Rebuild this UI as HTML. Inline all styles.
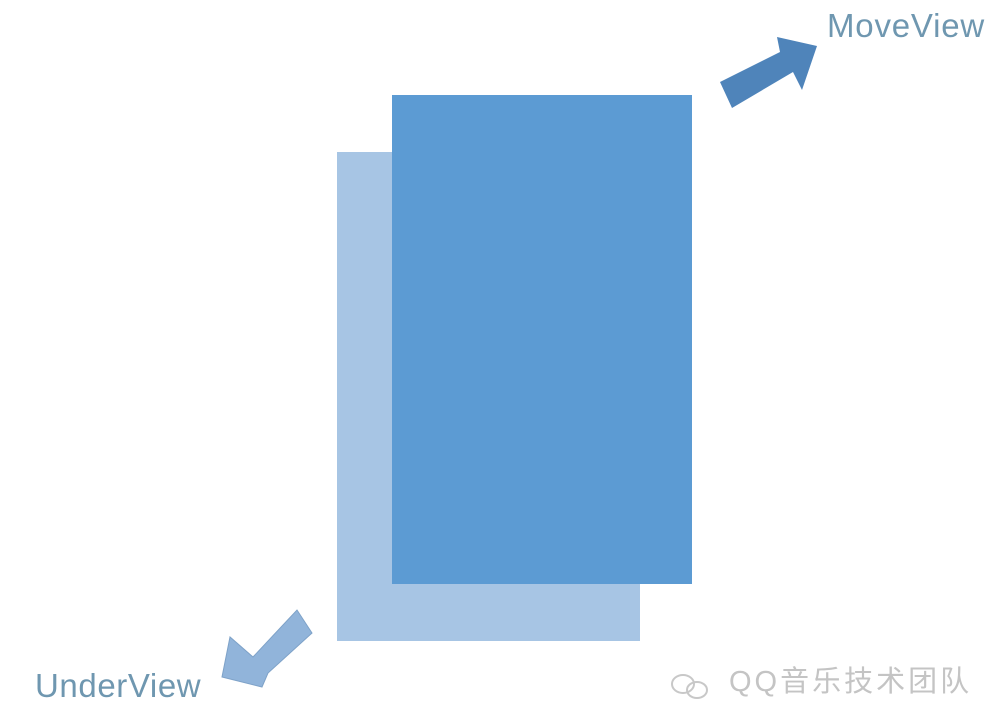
<!DOCTYPE html>
<html><head><meta charset="utf-8"><style>
html,body{margin:0;padding:0;background:#fff;width:1004px;height:728px;overflow:hidden;position:relative;font-family:"Liberation Sans","Noto Sans CJK SC",sans-serif}
.r{position:absolute}
.t{position:absolute;color:#6f97b0;font-size:33px;line-height:1;white-space:nowrap}
</style></head><body>
<div class="r" style="left:337px;top:152px;width:303px;height:489px;background:#a7c5e4"></div>
<div class="r" style="left:392px;top:95px;width:300px;height:489px;background:#5c9bd3"></div>
<svg class="r" style="left:0;top:0" width="1004" height="728">
<polygon points="720,82 780,52 777,37 817,46 802,90 793,72 732,108" fill="#4f84ba"/>
<polygon points="222,677 230,637 253,657 297,610 312,633 268,673 262,687" fill="#91b4da" stroke="#7ea2c8" stroke-width="1"/>
<g fill="none" stroke="#c8c8c8" stroke-width="2">
<ellipse cx="683" cy="684" rx="11" ry="9"/>
<ellipse cx="697" cy="690" rx="10" ry="8"/>
</g>
</svg>
<div class="t" style="left:827px;top:9px;letter-spacing:0.8px">MoveView</div>
<div class="t" style="left:35px;top:669px;letter-spacing:0.6px">UnderView</div>
<div class="t" style="left:729px;top:668px;font-size:29px;color:#c4c4c4;letter-spacing:3px">QQ音乐技术团队</div>
</body></html>
